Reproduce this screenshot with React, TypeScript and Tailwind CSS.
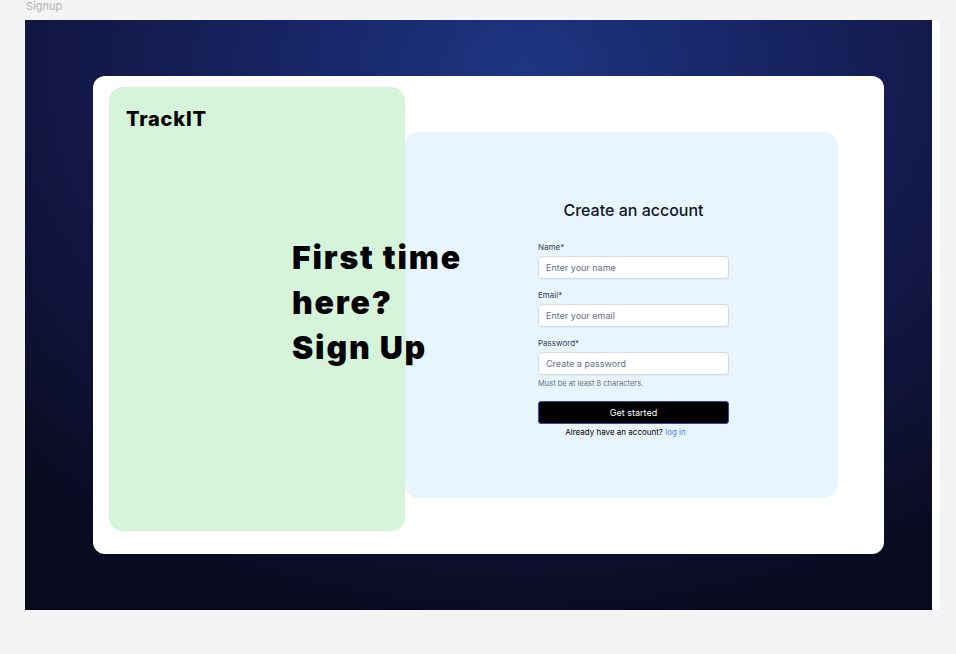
import React from "react";

export default function App() {
  const ui = { fontFamily: "Inter, 'Noto Sans', sans-serif" };
  return (
    <div className="w-[956px] h-[654px] bg-[#f4f4f4] overflow-hidden" style={ui}>
      <div className="h-[20px] pl-[26px] text-[11px] leading-[13px] text-[#b3b3b3]">Signup</div>
      <div className="flex ml-[25px]">
        <div
          className="w-[907px] h-[590px] pt-[56px] pl-[68px]"
          style={{
            background:
              "radial-gradient(ellipse 80% 95% at 55% 8%, #1d3682 0%, #18286c 25%, #13194a 58%, #0e1030 85%, #0a0b20 100%)",
          }}
        >
          <div className="relative w-[791px] h-[478px] bg-white rounded-[12px] flex items-start">
            <div className="ml-[16px] mt-[11px] w-[296px] h-[444px] bg-[#d6f4da] rounded-[14px] pt-[18px] pl-[17px]">
              <div className="text-[20px] leading-[28px] font-extrabold text-black tracking-[0.8px]">
                TrackIT
              </div>
            </div>
            <div className="mt-[56px] w-[433px] h-[366px] bg-[#e9f5fe] rounded-[14px] pl-[133px] pt-[67px]">
              <div className="w-[191px] flex flex-col">
                <div className="text-center text-[16px] leading-[22px] font-medium text-[#101828]">
                  Create an account
                </div>
                <div className="mt-[21px] text-[8px] leading-[10px] font-normal text-[#344054]">Name*</div>
                <div className="mt-[4px] h-[23px] bg-white border border-[#d6dbe3] rounded-[4px] shadow-[0_1px_1px_rgba(16,24,40,0.05)] flex items-center pl-[7px] text-[9px] text-[#667085]">
                  Enter your name
                </div>
                <div className="mt-[11px] text-[8px] leading-[10px] font-normal text-[#344054]">Email*</div>
                <div className="mt-[4px] h-[23px] bg-white border border-[#d6dbe3] rounded-[4px] shadow-[0_1px_1px_rgba(16,24,40,0.05)] flex items-center pl-[7px] text-[9px] text-[#667085]">
                  Enter your email
                </div>
                <div className="mt-[11px] text-[8px] leading-[10px] font-normal text-[#344054]">Password*</div>
                <div className="mt-[4px] h-[23px] bg-white border border-[#d6dbe3] rounded-[4px] shadow-[0_1px_1px_rgba(16,24,40,0.05)] flex items-center pl-[7px] text-[9px] text-[#667085]">
                  Create a password
                </div>
                <div className="mt-[4px] text-[7.5px] leading-[10px] text-[#667085]">Must be at least 8 characters.</div>
                <div className="mt-[12px] h-[23px] bg-black border border-[#3348a8] rounded-[3px] flex items-center justify-center text-[9px] text-white">
                  Get started
                </div>
                <div className="mt-[3px] pr-[16px] text-center text-[8px] leading-[10px] text-black">
                  Already have an account? <span className="text-[#4a7ff0]">log in</span>
                </div>
              </div>
            </div>
            <div className="absolute left-[199px] top-[159px] z-10 text-[32px] leading-[45px] font-black text-black tracking-[1.8px]">
              <div className="whitespace-nowrap">First time</div>
              <div>here?</div>
              <div>Sign Up</div>
            </div>
          </div>
        </div>
        <div className="w-[8px] h-[590px] bg-white" />
      </div>
    </div>
  );
}
